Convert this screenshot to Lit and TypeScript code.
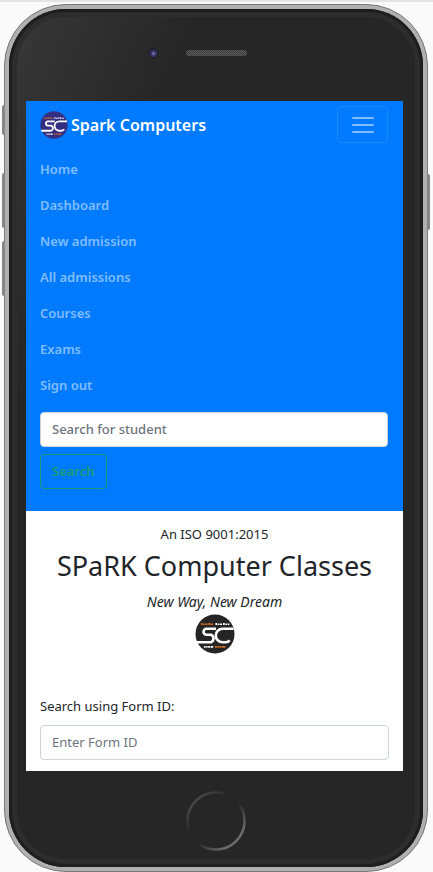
import { LitElement, html, css } from "lit";
import { customElement, property, state } from "lit/decorators.js";

@customElement("spark-logo")
export class SparkLogo extends LitElement {
  @property() tone = "dark";

  static styles = css`
    :host { display: block; }
    svg { display: block; width: 100%; height: 100%; }
    .disc { fill: #252525; }
    .disc.violet { fill: #352f83; }
    .stroke { fill: none; stroke: #fff; stroke-width: 2.6; stroke-linejoin: round; }
    .white { fill: #fff; }
    .accent { fill: #e07020; }
  `;

  render() {
    return html`
      <svg viewBox="0 0 40 40" role="img" aria-label="SC logo">
        <circle class="disc ${this.tone}" cx="20" cy="20" r="19.5" />
        <path class="accent" d="M6 9h1.6v2H6zM8.2 9.6h1.6v1.4H8.2zM10.4 9.4h2.2V11h-2.2zM13.4 9h2v2h-2zM16 9.6h2V11h-2z" />
        <path class="white" d="M20.4 9h1.6v2h-1.6zM22.6 9.6h1.8V11h-1.8zM25 9.4h2V11h-2zM28 9h1.8v2H28zM30.4 9.6h1.6V11h-1.6zM32.6 9.6h1.8V11h-1.8z" />
        <path class="stroke" d="M21 14.8H11.5a3 3 0 0 0 0 6H16a4 4 0 0 1 0 7.4H1.8" />
        <path class="stroke" d="M38.6 14.8H27.5a6.7 6.7 0 0 0 0 13.4H31q2.2 0 3.6-2" />
        <path class="white" d="M9 32h1.6v1.8H9zM11.2 32h1.4v1.8h-1.4zM13.2 32h1.8v1.8h-1.8zM15.6 32h2.6v1.8h-2.6z" />
        <path class="accent" d="M20 32h1.8v1.8H20zM22.4 32h1.6v1.8h-1.6zM24.6 32h1.8v1.8h-1.8zM27 32h3.4v1.8H27z" />
      </svg>
    `;
  }
}

@customElement("app-root")
export class AppRoot extends LitElement {
  @state() private open = true;

  private links = ["Home", "Dashboard", "New admission", "All admissions", "Courses", "Exams", "Sign out"];

  static styles = css`
    :host {
      display: block;
      background: #fafafa;
      border-top: 2px solid #e4e4e4;
      padding: 2px 5px 0 4px;
      color: #212529;
      font: 13px/22px "Noto Sans", sans-serif;
    }
    * { box-sizing: border-box; }
    .phone {
      position: relative;
      border: 1px solid #777;
      border-radius: 62px;
      background: #b0b0b0;
      padding: 4px;
    }
    .key {
      position: absolute;
      width: 3px;
      background: #858585;
      border-radius: 2px 0 0 2px;
      left: -3px;
    }
    .mute { top: 100px; height: 30px; }
    .louder { top: 168px; height: 55px; }
    .quieter { top: 236px; height: 55px; }
    .power { left: auto; right: -3px; top: 169px; height: 56px; border-radius: 0 2px 2px 0; }
    .bezel {
      border-radius: 57px;
      padding: 0 20px 0 17px;
      background: linear-gradient(115deg, #393939 0, #262626 170px);
      box-shadow: inset 0 0 0 3px #1e1e1e, inset 0 0 0 8px #2d2d2d;
    }
    .head {
      height: 92px;
      padding-bottom: 4px;
      display: grid;
      grid-template-columns: 1fr auto 1fr;
      align-items: center;
      margin-right: -3px;
    }
    .camera {
      justify-self: end;
      width: 13px;
      height: 13px;
      margin-right: 26px;
      border-radius: 50%;
      background: radial-gradient(circle, #6f6a99 0 1px, #3a3566 2px, #2c2848 4px, #1b1b1f 5px, #2c2c2c 6px);
    }
    .speaker {
      width: 61px;
      height: 6px;
      border-radius: 3px;
      background: repeating-conic-gradient(#5c5c5c 0 25%, #3a3a3a 0 50%) 0 0 / 2px 2px;
    }
    .screen { background: #fff; }
    .nav { background: #007bff; padding: 5px 15px 22px 14px; }
    .bar { display: flex; justify-content: space-between; align-items: center; }
    .brand {
      display: flex;
      align-items: center;
      gap: 3px;
      color: #fff;
      font-size: 16px;
      font-weight: 600;
      text-decoration: none;
      white-space: nowrap;
    }
    .brand spark-logo { width: 28px; height: 28px; }
    .toggler {
      width: 51px;
      height: 37px;
      padding: 0;
      display: grid;
      place-items: center;
      background: none;
      border: 1px solid #1a88ff;
      border-radius: 4px;
    }
    .toggler svg { display: block; }
    .links { list-style: none; margin: 8px 0 9px; padding: 0; }
    .links a {
      display: block;
      color: #80bdff;
      font-weight: 600;
      line-height: 36px;
      text-decoration: none;
    }
    input {
      display: block;
      width: 100%;
      height: 35px;
      padding: 0 11px 2px;
      border: 1px solid #ced4da;
      border-radius: 4px;
      background: #fff;
      color: #495057;
      font: inherit;
    }
    input::placeholder { color: #6c757d; opacity: 1; }
    .nav input, .find { font-weight: 500; }
    .find {
      display: block;
      height: 35px;
      margin-top: 7px;
      padding: 0 11px 2px;
      border: 1px solid #1a9c78;
      border-radius: 4px;
      background: none;
      color: #1d9b74;
      font: inherit;
      font-weight: 600;
    }
    .page { padding: 12px 14px 11px; }
    .intro { text-align: center; }
    p, h1 { margin: 0; }
    h1 { margin: 3px 0 7px; font-size: 27px; line-height: 36px; font-weight: 400; }
    .motto { font-size: 14px; font-style: italic; }
    .crest { width: 40px; height: 40px; margin: 1px auto 41px; }
    label { display: block; margin-bottom: 8px; }
    .foot { height: 96px; display: grid; justify-items: center; padding-top: 20px; margin-right: -3px; }
    .home { width: 60px; height: 60px; padding: 0; border: 0; background: none; border-radius: 50%; }
    .home svg { display: block; }
  `;

  render() {
    return html`
      <div class="phone">
        <span class="key mute"></span>
        <span class="key louder"></span>
        <span class="key quieter"></span>
        <span class="key power"></span>
        <div class="bezel">
          <div class="head">
            <span class="camera"></span>
            <span class="speaker"></span>
          </div>
          <main class="screen">
            <nav class="nav">
              <div class="bar">
                <a class="brand" href="#"><spark-logo tone="violet"></spark-logo>Spark Computers</a>
                <button class="toggler" aria-label="Toggle navigation" @click=${() => (this.open = !this.open)}>
                  <svg width="22" height="18" viewBox="0 0 22 18" stroke="#80bdff" stroke-width="2" stroke-linecap="round">
                    <path d="M1 2h20M1 9h20M1 16h20" />
                  </svg>
                </button>
              </div>
              ${this.open
                ? html`
                    <ul class="links">
                      ${this.links.map((name) => html`<li><a href="#">${name}</a></li>`)}
                    </ul>
                    <form @submit=${(e: Event) => e.preventDefault()}>
                      <input type="search" placeholder="Search for student" aria-label="Search for student" />
                      <button class="find">Search</button>
                    </form>
                  `
                : null}
            </nav>
            <section class="page">
              <div class="intro">
                <p>An ISO 9001:2015</p>
                <h1>SPaRK Computer Classes</h1>
                <p class="motto">New Way, New Dream</p>
                <spark-logo class="crest"></spark-logo>
              </div>
              <label for="form-id">Search using Form ID:</label>
              <input id="form-id" type="text" placeholder="Enter Form ID" />
            </section>
          </main>
          <div class="foot">
            <button class="home" aria-label="Home">
              <svg width="60" height="60" viewBox="0 0 60 60">
                <defs>
                  <linearGradient id="ring" x1="0.1" y1="0.1" x2="0.9" y2="0.9">
                    <stop offset="0" stop-color="#4c4c4c" />
                    <stop offset="0.35" stop-color="#262626" />
                    <stop offset="0.55" stop-color="#262626" />
                    <stop offset="0.9" stop-color="#6c6c6c" />
                  </linearGradient>
                </defs>
                <circle cx="30" cy="30" r="28.5" fill="none" stroke="url(#ring)" stroke-width="2.5" />
              </svg>
            </button>
          </div>
        </div>
      </div>
    `;
  }
}
